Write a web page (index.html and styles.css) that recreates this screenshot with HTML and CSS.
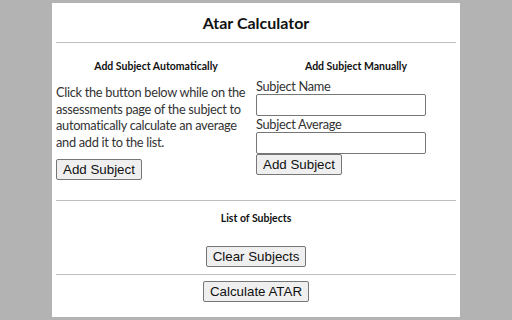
FILE: index.html
```html
<!DOCTYPE html>
<html>
<head>
<meta charset="utf-8">
<link rel="stylesheet" href="styles.css">
</head>
<body>
<div class="panel">
  <h1 class="title">Atar Calculator</h1>
  <hr class="rule">
  <div class="cols">
    <div class="col">
      <h2 class="sub">Add Subject Automatically</h2>
      <p class="desc">Click the button below while on the assessments page of the subject to automatically calculate an average and add it to the list.</p>
      <button class="btn">Add Subject</button>
    </div>
    <div class="col">
      <h2 class="sub">Add Subject Manually</h2>
      <label class="lbl">Subject Name</label>
      <input class="field" type="text">
      <label class="lbl lbl2">Subject Average</label>
      <input class="field" type="text">
      <div class="btn-wrap"><button class="btn">Add Subject</button></div>
    </div>
  </div>
  <hr class="rule">
  <h2 class="sub center">List of Subjects</h2>
  <div class="center-row list-row"><button class="btn">Clear Subjects</button></div>
  <hr class="rule">
  <div class="center-row calc-row"><button class="btn">Calculate ATAR</button></div>
</div>
</body>
</html>
```
FILE: styles.css
```css
html, body {
  margin: 0;
  padding: 0;
  background: #b3b3b3;
  height: 320px;
  overflow: hidden;
}
.panel {
  width: 400px;
  height: 314px;
  margin: 3px auto 0;
  padding: 0 4px;
  background: #ffffff;
  font-family: Lato, "Noto Sans", sans-serif;
  color: #222;
}
.title {
  margin: 0;
  padding-top: 8px;
  height: 31px;
  font-size: 16px;
  line-height: 24px;
  text-align: center;
  color: #111;
}
.rule {
  border: none;
  border-top: 1px solid #bdbdbd;
  margin: 0;
  height: 0;
}
.cols {
  display: grid;
  grid-template-columns: 200px 200px;
  padding-top: 15px;
  height: 142px;
}
.col {
  display: flex;
  flex-direction: column;
  align-items: flex-start;
}
.sub {
  margin: 0;
  font-size: 10.5px;
  line-height: 16px;
  font-weight: bold;
  color: #111;
  align-self: stretch;
  text-align: center;
}
.desc {
  margin: 10px 0 9px;
  font-size: 12.8px;
  letter-spacing: -0.3px;
  line-height: 16.5px;
  color: #333;
}
.btn {
  font-family: "Liberation Sans", Arial, sans-serif;
  font-size: 13.33px;
  color: #111;
  background: #efefef;
  border: 1px solid #767676;
  border-radius: 2px;
  padding: 1px 6px;
  height: 21px;
  line-height: 17px;
}
.btn-wrap {
  display: flex;
}
.lbl {
  margin-top: 5px;
  font-size: 12.8px;
  letter-spacing: -0.3px;
  line-height: 15px;
  color: #333;
}
.lbl2 {
  margin-top: 0;
  line-height: 16px;
}
.field {
  box-sizing: border-box;
  width: 170px;
  height: 22px;
  margin: 0;
  border: 1px solid #767676;
  border-radius: 2px;
  padding: 1px 2px;
}
.center {
  padding-top: 9px;
}
.center-row {
  display: flex;
  justify-content: center;
}
.list-row {
  padding-top: 20px;
  height: 28px;
}
.calc-row {
  padding-top: 6px;
}
```
